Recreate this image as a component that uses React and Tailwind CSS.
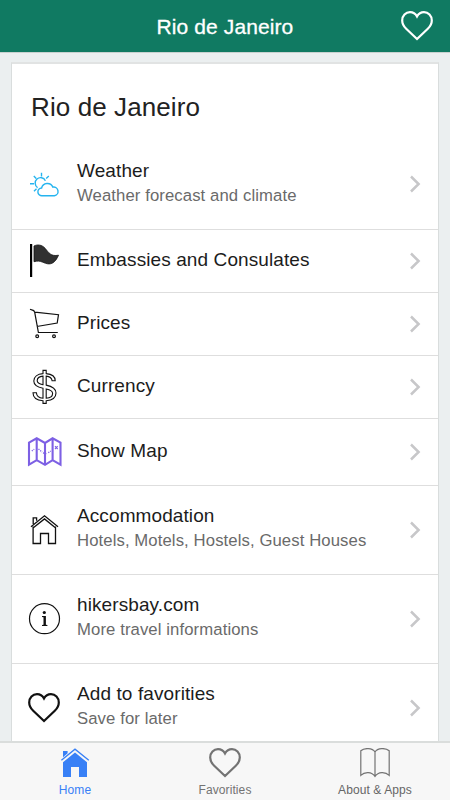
const font = "font-['Liberation_Sans',Arial,sans-serif]";

function Heart({ className, strokeWidth = 2.2 }) {
  return (
    <svg className={className} width="32" height="30" viewBox="0 0 32 30" fill="none" stroke="currentColor" strokeWidth={strokeWidth}>
      <path d="M16 28 L5.2 17.8 C2.5 15.2 1.2 12.7 1.2 9.5 C1.2 4.8 4.7 1.2 9 1.2 C12.1 1.2 14.6 2.9 16 5.4 C17.4 2.9 19.9 1.2 23 1.2 C27.3 1.2 30.8 4.8 30.8 9.5 C30.8 12.7 29.5 15.2 26.8 17.8 Z" />
    </svg>
  );
}

function Weather() {
  return (
    <svg width="44" height="44" viewBox="24 163 44 44" fill="none" stroke="#25b4ef" strokeWidth="1.4">
      <path d="M41.5 172.7v3.8M33.8 176l2.4 2.4M48.8 176l-2.6 2.4M30 183.8h4M34 191.2l2.5-2.4M37.6 187.6a5.4 5.4 0 1 1 7.8-6.9" />
      <path d="M42 195.8a3.9 3.9 0 0 1-.4-7.8 5.9 5.9 0 0 1 11.2-.9 4.4 4.4 0 1 1 1.6 8.7z" />
    </svg>
  );
}

function Flag() {
  return (
    <svg width="44" height="44" viewBox="24 239 44 44">
      <path d="M30 244h2.2v33H30z" fill="#000" />
      <path d="M34 246c3.6-1.8 7.8-1.3 11 2.2 3.7 4.3 5.8 8.6 13.5 7-2.5 6-5.8 8.7-9.5 8.7-5.2 0-7.8-4.3-15-2.2z" fill="#303030" stroke="#111" strokeWidth=".8" />
    </svg>
  );
}

function Cart() {
  return (
    <svg width="44" height="44" viewBox="24 302 44 44" fill="none" stroke="#111" strokeWidth="1.2">
      <path d="M30 309.2l3.7 1.4 1 1.7 3.7 20.2h19.4M34.8 312.2l23.7 2.5-1.3 8.3-20.4 3.5" />
      <circle cx="37.2" cy="336.2" r="1.4" />
      <circle cx="54" cy="336.2" r="1.4" />
    </svg>
  );
}

function Dollar() {
  return (
    <svg width="44" height="44" viewBox="24 365 44 44" fill="none" stroke="#111" strokeWidth="1.1">
      <path d="M43 370.4h3.2v3.2c5.8.4 9 3.2 9 7.1h-3.1c-.4-2.8-2.3-4.2-5.9-4.6v9c6.5 1.3 9.8 3.5 9.8 8 0 4.4-3.4 7.2-9.8 7.6v2.7H43v-2.7c-6.2-.4-10-3.4-10-8h3.4c.2 3.2 2.8 5.2 6.6 5.5v-9.9c-5.7-1.2-9.2-3.1-9.2-7.3 0-4.2 3.7-7.1 9.2-7.4z" />
      <path d="M43 376.1c-3.7.3-5.8 2.1-5.8 4.6 0 2.2 1.7 3.2 5.8 4zM46.2 389v9.2c4.2-.3 6.4-2.3 6.4-4.8s-1.7-3.5-6.4-4.4z" />
    </svg>
  );
}

function MapIcon() {
  return (
    <svg width="44" height="44" viewBox="24 430 44 44" fill="none" stroke="#7d60e4" strokeWidth="2.1">
      <path d="M29 442.6l7.7-4.3 8.3 4.7 7.6-4.7 7.9 4.3v22l-7.9-4.4-7.6 4.6-8.3-4.6-7.7 4.4zM36.7 438v22.2M45 443v21.8M52.6 438v22.2" />
      <path d="M31.8 451l2.4-1.8M38.5 449l3.6 3M43 453l3.4.6M48.3 452.8l2.4-1.8" strokeWidth="1.3" strokeDasharray="1.2 1" />
      <path d="M55 446.2l2.7 2.8M57.7 446.2L55 449" strokeWidth="1.1" />
    </svg>
  );
}

function House() {
  return (
    <svg width="44" height="44" viewBox="24 508 44 44" fill="none" stroke="#111" strokeWidth="1.3">
      <path d="M31 526.8l13.5-11L58 526.8M33.1 526.5v17h7.4v-10h8v10h7v-17M33 527.9l11.5-9 11.2 9M33.2 524v-6.2h3.4v3" />
    </svg>
  );
}

function Info() {
  return (
    <svg width="44" height="44" viewBox="24 597 44 44">
      <circle cx="44.5" cy="618.7" r="15" fill="none" stroke="#111" strokeWidth="1.2" />
      <circle cx="44.3" cy="612.5" r="1.6" fill="#111" />
      <path d="M42 616h3.9v8.8l1.5.3v.9h-5.4v-.9l1.5-.3v-7.5l-1.5-.4z" fill="#111" />
    </svg>
  );
}

function Chevron() {
  return (
    <svg className="mr-[17px] mb-px" width="12" height="18" viewBox="0 0 12 18" fill="none" stroke="#c7c7c9" strokeWidth="2.5">
      <path d="M2 1.5L9.6 9 2 16.5" />
    </svg>
  );
}

function HomeSolid() {
  return (
    <svg width="32" height="30" viewBox="59 748 32 30" fill="#3880f6">
      <path d="M63 751h4.6v2.3L63 757.2zM75 752.6l12 9.6V777h-8v-10h-8v10h-8v-14.8z" />
      <path d="M61.4 760.2L75 749.2l13.8 11" fill="none" stroke="#3880f6" strokeWidth="1.3" />
    </svg>
  );
}

function Book() {
  return (
    <svg width="32" height="30" viewBox="359 748 32 30" fill="none" stroke="#737373" strokeWidth="1.2">
      <path d="M375 752c-2.5-4.3-10.8-4.3-14.2-1.3v24.6c3.8-3.8 11-3.8 14.2 1.1 3.2-4.9 10.4-4.9 14.2-1.1v-24.6c-3.4-3-11.7-3-14.2 1.3zM375 752v24.4" />
    </svg>
  );
}

const rows = [
  { title: "Weather", sub: "Weather forecast and climate", icon: <Weather />, h: "h-[90px]" },
  { title: "Embassies and Consulates", icon: <Flag />, h: "h-[63px]" },
  { title: "Prices", icon: <Cart />, h: "h-[63px]" },
  { title: "Currency", icon: <Dollar />, h: "h-[63px]" },
  { title: "Show Map", icon: <MapIcon />, h: "h-[67px]" },
  { title: "Accommodation", sub: "Hotels, Motels, Hostels, Guest Houses", icon: <House />, h: "h-[89px]" },
  { title: "hikersbay.com", sub: "More travel informations", icon: <Info />, h: "h-[89px]" },
  { title: "Add to favorities", sub: "Save for later", icon: <Heart className="ml-1 mr-2 text-[#111]" />, h: "h-[89px]" },
];

function Row({ title, sub, icon, h }) {
  return (
    <div className={`flex shrink-0 items-center border-b border-[#dedede] pl-3 ${h}`}>
      {icon}
      <div className={`ml-[9px] flex-1 whitespace-nowrap ${sub ? "pb-1" : "pb-[3px]"}`}>
        <div className="text-[19px] leading-[25px] tracking-[0.1px] text-[#1c1c1c]">{title}</div>
        {sub && <div className="text-[16.7px] leading-[25px] tracking-[0.1px] text-[#6a6a6a]">{sub}</div>}
      </div>
      <Chevron />
    </div>
  );
}

function Tab({ label, icon, className }) {
  return (
    <div className={`flex flex-1 flex-col items-center pt-[5px] ${className}`}>
      {icon}
      <span className="mt-[5px] text-[12px] leading-[14px] tracking-[0.1px]">{label}</span>
    </div>
  );
}

export default function App() {
  return (
    <div className={`flex h-[800px] w-[450px] flex-col overflow-hidden bg-[#ebeff0] ${font}`}>
      <header className="grid h-[52px] shrink-0 grid-cols-[49px_1fr_49px] items-center bg-[#107a62] text-white">
        <span />
        <h1 className="pt-[2px] text-center text-[21px] leading-6 tracking-[0.1px] [-webkit-text-stroke:0.3px_white]">Rio de Janeiro</h1>
        <Heart />
      </header>
      <main className="min-h-0 flex-1 overflow-hidden border-t border-[#c9d1d0] px-[11px] pt-[9px]">
        <div className="flex flex-col border-x border-t-2 border-x-[#d9dddd] border-t-[#e1e3e3] bg-white">
          <h2 className="h-[76px] shrink-0 pl-[19px] pt-[27px] text-[26px] leading-8 tracking-[0.1px] text-[#222]">Rio de Janeiro</h2>
          {rows.map((row) => <Row key={row.title} {...row} />)}
        </div>
      </main>
      <nav className="flex h-[59px] shrink-0 border-t-2 border-[#dadddc] bg-[#f7f7f7]">
        <Tab label="Home" icon={<HomeSolid />} className="text-[#3880f6]" />
        <Tab label="Favorities" icon={<Heart />} className="text-[#737373]" />
        <Tab label="About & Apps" icon={<Book />} className="text-[#666]" />
      </nav>
    </div>
  );
}
